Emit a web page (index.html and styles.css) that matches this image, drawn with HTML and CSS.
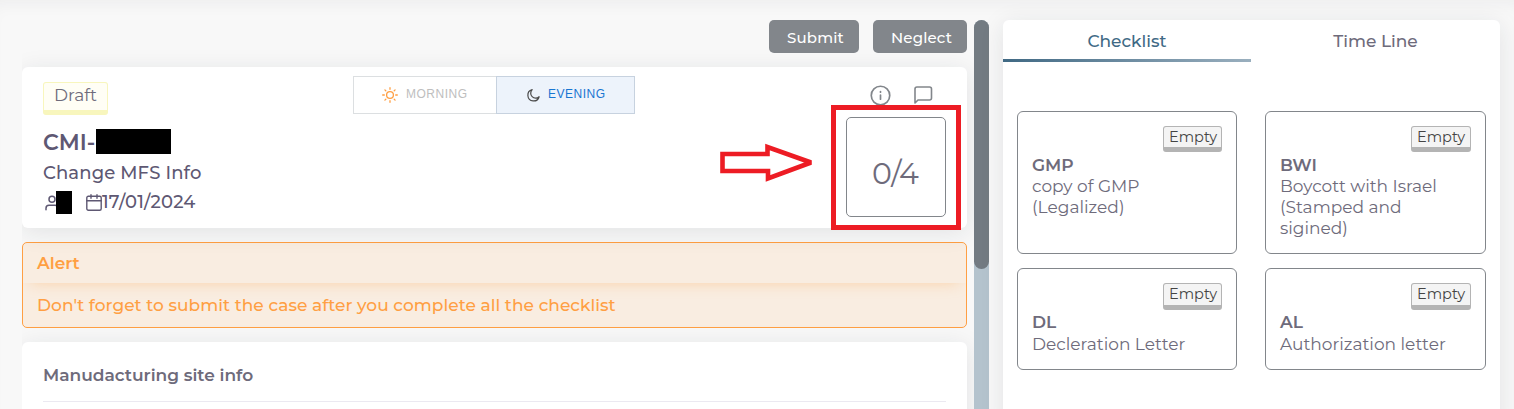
FILE: index.html
```html
<!DOCTYPE html>
<html lang="en">
<head>
<meta charset="utf-8">
<title>Case details</title>
<link rel="stylesheet" href="styles.css">
</head>
<body>
<main class="page">
  <section class="case">
    <div class="case-content">
      <div class="actions">
        <button class="btn btn-submit">Submit</button>
        <button class="btn btn-neglect">Neglect</button>
      </div>
      <article class="card summary">
        <div class="summary-info">
          <div class="draft">Draft</div>
          <div class="case-id"><span>CMI-</span><span class="mask mask-id"></span></div>
          <div class="case-type">Change MFS Info</div>
          <div class="meta">
            <svg class="icon-user" viewBox="0 0 24 24"><path d="M20 21v-2a4 4 0 0 0-4-4H8a4 4 0 0 0-4 4v2"/><circle cx="12" cy="7" r="4"/></svg>
            <span class="mask mask-user"></span>
            <svg class="icon-cal" viewBox="0 0 16 17"><rect x=".8" y="2.300" width="14.400" height="13.900" rx="1.500"/><path d="M11 .8v3.400M5 .8v3.400M.8 6.700h14.400"/></svg>
            <span>17/01/2024</span>
          </div>
        </div>
        <div class="shift">
          <div class="shift-item morning">
            <svg class="icon-sun" viewBox="0 0 16 16"><circle cx="8" cy="8" r="3.400"/><path d="M8 .7v1.600M8 13.700v1.600M.7 8h1.600M13.700 8h1.600M2.900 2.900l.9.900M12.200 12.200l.9.900M2.900 13.100l.9-.9M12.200 3.800l.9-.9"/></svg>
            <span>MORNING</span>
          </div>
          <div class="shift-item evening">
            <svg class="icon-moon" viewBox="0 0 16 16"><path d="M6.600 1.800A6.100 6.100 0 1 0 14 9.300A4.600 4.600 0 0 1 6.600 1.800z"/></svg>
            <span>EVENING</span>
          </div>
        </div>
        <div class="summary-side">
          <div class="tools">
            <svg class="icon-info" viewBox="0 0 20 20"><circle cx="10" cy="10" r="8.800"/><path d="M10 9.500v4M10 6.200v.6"/></svg>
            <svg class="icon-chat" viewBox="0 0 20 20"><path d="M2 18V4a2 2 0 0 1 2-2h12.500a2 2 0 0 1 2 2v9a2 2 0 0 1-2 2H5z"/></svg>
          </div>
          <div class="counter">0/4<div class="marker"></div></div>
        </div>
        <svg class="arrow" viewBox="0 0 96 40"><path d="M2.500 11H47.500V4L91 19.500L48 35.500V28H2.500z"/></svg>
      </article>
      <article class="alert">
        <div class="alert-head">Alert</div>
        <div class="alert-body">Don't forget to submit the case after you complete all the checklist</div>
      </article>
      <article class="card site">
        <h2 class="site-title">Manudacturing site info</h2>
      </article>
    </div>
    <div class="track"><div class="thumb"></div></div>
  </section>
  <aside class="panel">
    <nav class="tabs">
      <div class="tab active">Checklist</div>
      <div class="tab">Time Line</div>
    </nav>
    <div class="tiles">
      <div class="tile"><div class="empty narrow">Empty</div><h3>GMP</h3><p>copy of GMP<br>(Legalized)</p></div>
      <div class="tile"><div class="empty">Empty</div><h3>BWI</h3><p>Boycott with Israel<br>(Stamped and<br>sigined)</p></div>
      <div class="tile short"><div class="empty narrow">Empty</div><h3>DL</h3><p>Decleration Letter</p></div>
      <div class="tile short"><div class="empty">Empty</div><h3>AL</h3><p>Authorization letter</p></div>
    </div>
  </aside>
</main>
</body>
</html>
```
FILE: styles.css
```css
* { box-sizing: border-box; }
body { margin: 0; background: #f8f8f8; color: #6e6b7b; font: 400 17px/21px Montserrat, Inter, "Open Sans", sans-serif; }
h2, h3, p { margin: 0; }
svg { display: block; fill: none; stroke: currentColor; stroke-linecap: round; stroke-linejoin: round; flex: none; }
span { white-space: nowrap; }
.page { display: flex; gap: 14px; height: 409px; padding: 0 14px 0 22px; overflow: hidden; box-shadow: inset 0 14px 18px -12px rgba(34, 41, 47, .06); }
.case { display: flex; width: 967px; flex: none; }
.case-content { width: 952px; padding: 20px 7px 0 0; overflow: hidden; display: flex; flex-direction: column; gap: 14px; }
.actions { display: flex; justify-content: flex-end; gap: 14px; height: 33px; flex: none; }
.btn { border: 0; border-radius: 5px; background: #82868b; color: #fff; font: 500 15px/33px Montserrat, Inter, sans-serif; letter-spacing: .15px; padding: 1px 0 0 18px; text-align: left; height: 33px; }
.btn-submit { width: 90px; }
.btn-neglect { width: 94px; }
.card { background: #fff; border-radius: 6px; box-shadow: 0 4px 24px rgba(34, 41, 47, .1); flex: none; }
.summary { position: relative; display: flex; height: 161px; padding: 9px 21px 0; }
.summary-info { width: 310px; padding-top: 6px; color: #5e5873; }
.draft { width: 65px; height: 33px; border: 1px solid #f8f6bd; border-bottom-width: 5px; border-radius: 3px; background: #fffef5; color: #6e6b7b; padding-left: 10px; line-height: 25px; font-size: 17px; }
.case-id { display: flex; align-items: center; margin-top: 14px; height: 25px; font-size: 22px; font-weight: 600; line-height: 31px; padding-top: 2px; }
.mask { background: #000; display: block; }
.mask-id { width: 75px; height: 25px; margin: -2px 182px 0 auto; flex: none; }
.case-type { margin-top: 9px; font-size: 18px; font-weight: 500; letter-spacing: .13px; }
.meta { display: flex; align-items: center; height: 23px; margin-top: 7px; font-size: 18px; font-weight: 500; letter-spacing: .15px; }
.icon-user { width: 18px; height: 18px; stroke-width: 2; margin-right: -5px; margin-top: 1px; }
.mask-user { position: relative; width: 16px; height: 23px; margin-right: 14px; flex: none; }
.icon-cal { width: 16px; height: 17px; stroke-width: 1.4; }
.shift { display: flex; width: 282px; height: 38px; font: 12px/14px "Liberation Sans", Arial, sans-serif; letter-spacing: .5px; }
.shift-item { display: flex; align-items: center; border: 1px solid #dcdfe1; gap: 7px; padding-left: 29px; padding-bottom: 2px; }
.morning { width: 143px; border-right: 0; color: #bebebe; }
.evening { width: 139px; border-color: #c7d2df; background: #edf3fb; color: #1976d2; }
.icon-sun { width: 16px; height: 16px; color: #ff9f43; margin: 2px 1px 0 -1px; stroke-width: 1.3; }
.icon-moon { width: 15px; height: 15px; color: #4b4b4b; margin-top: 3px; stroke-width: 1.3; }
.summary-side { margin-left: auto; width: 100px; color: #82868b; }
.tools { display: flex; gap: 22px; padding: 9px 0 0 24px; height: 41px; }
.icon-info { width: 21px; height: 21px; stroke-width: 1.6; }
.icon-chat { width: 20px; height: 20px; stroke-width: 1.6; }
.counter { position: relative; width: 100px; height: 100px; border: 1px solid #82868b; border-radius: 5px; color: #6e6b7b; font-size: 30px; line-height: 112px; padding-left: 25px; letter-spacing: -.1px; }
.marker { position: absolute; left: -16px; top: -13px; width: 130px; height: 125px; border: 5px solid #ed1c24; }
.arrow { position: absolute; left: 698px; top: 76px; width: 96px; height: 40px; color: #ed1c24; stroke-width: 4.6; stroke-linejoin: miter; stroke-miterlimit: 2; }
.alert { height: 86px; flex: none; border: 1px solid #ff9f43; border-radius: 5px; background: rgba(255, 159, 67, .13); color: #ff9f43; overflow: hidden; }
.alert-head { height: 40px; padding: 10px 14px; font-weight: 600; box-shadow: 0 6px 15px -7px rgba(255, 159, 67, .4); clip-path: inset(0 0 -20px 0); }
.alert-body { padding: 12px 14px; font-weight: 500; letter-spacing: .04px; }
.site { height: 120px; padding: 0 21px; }
.site-title { height: 60px; border-bottom: 1px solid #ebe9f1; padding-top: 23px; font-size: 17px; font-weight: 600; }
.track { width: 15px; height: 389px; margin-top: 20px; border-radius: 8px 8px 0 0; background: #b4c3cd; }
.thumb { width: 15px; height: 249px; border-radius: 8px; background: #737b82; }
.panel { width: 497px; height: 410px; margin-top: 20px; border-radius: 6px; background: #fff; box-shadow: 0 4px 24px rgba(34, 41, 47, .1); flex: none; }
.tabs { display: grid; grid-template-columns: 248px 249px; height: 42px; font-weight: 500; }
.tab { display: flex; justify-content: center; padding-top: 11px; border-bottom: 3px solid transparent; }
.tab.active { color: #3f6a85; border-image: linear-gradient(90deg, #3f6883, #9bb0bf) 3; }
.tiles { display: grid; grid-template: 143px 102px / 220px 221px; gap: 14px 28px; padding: 49px 14px 0; }
.tile { border: 1px solid #82868b; border-radius: 6px; padding: 14px; }
.empty { width: 60px; height: 26px; margin-left: auto; border: 1px solid #b4b4b4; border-bottom-width: 5px; border-radius: 3px; background: #f4f4f4; color: #444; padding-left: 5px; font-size: 14.500px; line-height: 21px; }
.empty.narrow { width: 59px; }
.short .empty { height: 27px; }
.tile h3 { font-size: 17px; font-weight: 600; line-height: 22px; margin-top: 2px; }
.short h3 { margin-top: 1px; }
.tile p { font-size: 17px; line-height: 21px; white-space: nowrap; }
.short p { margin-top: 1px; }
```
